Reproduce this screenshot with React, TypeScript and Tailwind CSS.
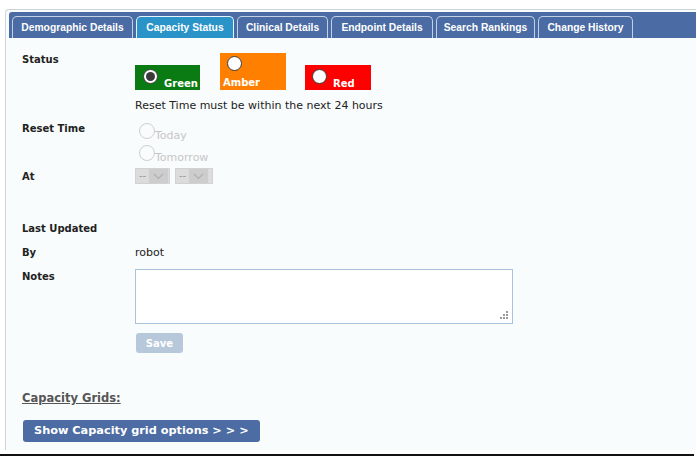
import React from "react";

const verd = "font-['DejaVu_Sans',Verdana,sans-serif]";
const tah = "font-['Liberation_Sans',Tahoma,Arial,sans-serif]";

/* ─── Tabs ─────────────────────────────────────── */
const tabs = [
  { label: "Demographic Details", w: "w-[121px]" },
  { label: "Capacity Status", w: "w-[98px]", active: true },
  { label: "Clinical Details", w: "w-[91px]" },
  { label: "Endpoint Details", w: "w-[102px]" },
  { label: "Search Rankings", w: "w-[99px]" },
  { label: "Change History", w: "w-[95px]" },
];

function TabBar() {
  return (
    <div className="mt-[2px] ml-[3px] h-[26px] bg-[#4a6ba3] rounded-tl-[3px] flex items-end gap-[3px] pl-[3px]">
      {tabs.map((t) => (
        <div
          key={t.label}
          className={
            "h-[22px] flex items-center justify-center rounded-t-[5px] border border-b-0 text-white font-bold text-[10.3px] " +
            tah + " " + t.w + " " +
            (t.active ? "bg-[#2a93c8] border-[#e8f2fa]" : "bg-[#4a6ba3] border-[#c3d0e4]")
          }
        >
          {t.label}
        </div>
      ))}
    </div>
  );
}

/* ─── Radios ───────────────────────────────────── */
function Radio({ checked }: { checked?: boolean }) {
  return (
    <span className="w-[15px] h-[15px] rounded-full bg-white border border-[#3a3a3a] flex items-center justify-center shrink-0">
      {checked && <span className="w-[9px] h-[9px] rounded-full bg-[#3a3a3a]" />}
    </span>
  );
}

function DisabledRadio({ label }: { label: string }) {
  return (
    <div className="h-[22px] flex items-start pt-[1px] ml-[4px]">
      <span className="w-[16px] h-[16px] rounded-full border border-[#cfcfcf] shrink-0" />
      <span className={"text-[11px] text-[#c6c6c6] mt-[5px] " + verd}>{label}</span>
    </div>
  );
}

function Select() {
  return (
    <div className="h-[16px] flex bg-[#dcdcdc] border border-[#d2d2d2]">
      <span className={"text-[10px] text-[#9a9a9a] leading-[14px] px-[3px] " + verd}>--</span>
      <span className="w-[19px] bg-[#cdcdcd] flex items-center justify-center">
        <svg width="11" height="7" viewBox="0 0 11 7">
          <polyline points="1,1 5.5,5.5 10,1" fill="none" stroke="#b0b0b0" strokeWidth="1.2" />
        </svg>
      </span>
    </div>
  );
}

function Row({ label, children, className }: { label?: string; children?: React.ReactNode; className?: string }) {
  return (
    <div className={"flex " + (className || "")}>
      <div className={"w-[113px] shrink-0 text-[10px] font-bold text-[#222] leading-[13px] " + verd}>{label}</div>
      <div className="flex-1">{children}</div>
    </div>
  );
}

/* ─── Page ─────────────────────────────────────── */
export default function App() {
  return (
    <div className="w-[697px] h-[474px] bg-white overflow-hidden">
      <div className="h-[9px]" />
      <div className="ml-[5px] mr-[1px] h-[441px] border-l border-t border-[#cdd3d8] rounded-tl-[4px] bg-[#f8fcfc]">
        <TabBar />

        <div className="pl-[16px]">
          {/* Status */}
          <Row label="Status" className="mt-[15px]">
            <div className="flex items-end">
              <div className="w-[65px] h-[25px] bg-[#0a7a12] flex pl-[8px]">
                <span className="mt-[4px]"><Radio checked /></span>
                <span className={"ml-[6px] mt-[11px] text-white font-bold text-[10px] " + verd}>Green</span>
              </div>
              <div className="ml-[20px] w-[66px] h-[37px] bg-[#ff7f00] flex flex-col px-[3px] pt-[3px]">
                <span className="ml-[4px]"><Radio /></span>
                <span className={"mt-[5px] text-white font-bold text-[10px] leading-[13px] " + verd}>Amber</span>
              </div>
              <div className="ml-[19px] w-[66px] h-[25px] bg-[#ff0000] flex pl-[7px]">
                <span className="mt-[4px]"><Radio /></span>
                <span className={"ml-[6px] mt-[11px] text-white font-bold text-[10px] " + verd}>Red</span>
              </div>
            </div>
            <p className={"mt-[9px] text-[11px] leading-[13px] text-[#222] " + verd}>
              Reset Time must be within the next 24 hours
            </p>
          </Row>

          {/* Reset time */}
          <Row label="Reset Time" className="mt-[10px]">
            <DisabledRadio label="Today" />
            <DisabledRadio label="Tomorrow" />
          </Row>

          {/* At */}
          <Row label="At" className="mt-[4px]">
            <div className="flex gap-[5px] -mt-[2px]">
              <div className="w-[35px]"><Select /></div>
              <div className="w-[38px]"><Select /></div>
            </div>
          </Row>

          <Row label="Last Updated" className="mt-[38px]" />
          <Row label="By" className="mt-[11px]">
            <span className={"text-[11px] leading-[13px] text-[#222] block " + verd}>robot</span>
          </Row>

          {/* Notes */}
          <Row label="Notes" className="mt-[11px]">
            <div className="-mt-[1px] w-[378px] h-[55px] bg-white border border-[#a9c3dc] relative">
              <svg className="absolute right-[3px] bottom-[3px]" width="9" height="9" viewBox="0 0 9 9">
                <rect x="6" y="0" width="2" height="2" fill="#9a9a9a" />
                <rect x="3" y="3" width="2" height="2" fill="#9a9a9a" />
                <rect x="6" y="3" width="2" height="2" fill="#9a9a9a" />
                <rect x="0" y="6" width="2" height="2" fill="#9a9a9a" />
                <rect x="3" y="6" width="2" height="2" fill="#9a9a9a" />
                <rect x="6" y="6" width="2" height="2" fill="#9a9a9a" />
              </svg>
            </div>
            <button className={"mt-[9px] ml-[1px] w-[47px] h-[20px] rounded-[3px] bg-[#b8c8db] text-white font-bold text-[10px] " + verd}>
              Save
            </button>
          </Row>

          {/* Capacity grids */}
          <p className={"mt-[38px] text-[11.5px] font-bold text-[#555] underline leading-[14px] " + verd}>Capacity Grids:</p>
          <button className={"mt-[15px] ml-[1px] w-[237px] h-[22px] rounded-[3px] bg-[#4c6ca3] text-white font-bold text-[11.3px] text-left pl-[11px] " + verd}>
            Show Capacity grid options &gt; &gt; &gt;
          </button>
        </div>
      </div>
      <div className="mt-[4px] h-[2px] w-[694px] bg-[#111]" />
    </div>
  );
}
